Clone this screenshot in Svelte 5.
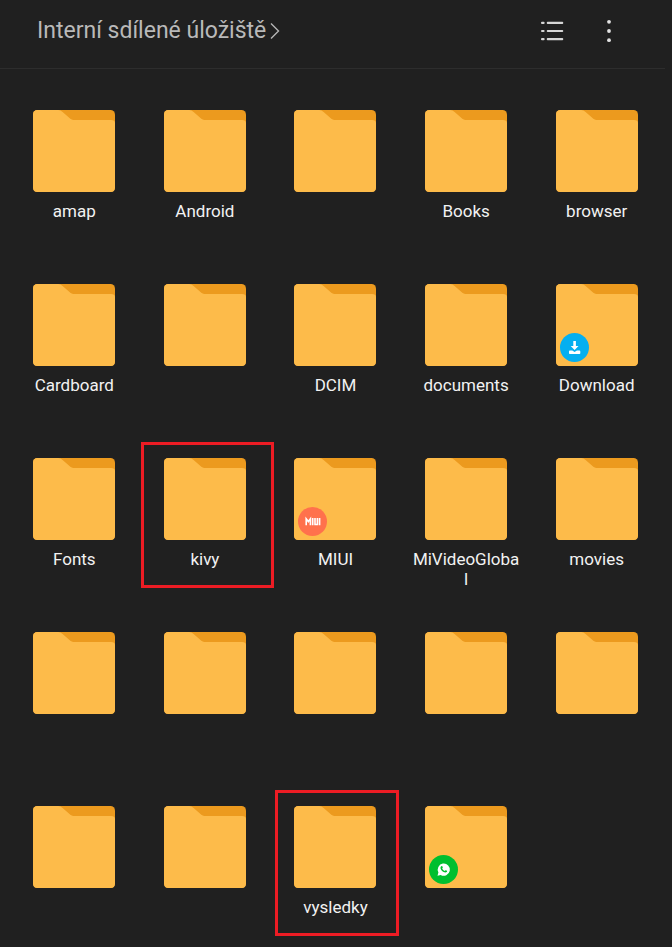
<script>
  const folders = [
    { name: 'amap' },
    { name: 'Android' },
    { name: '' },
    { name: 'Books' },
    { name: 'browser' },
    { name: 'Cardboard' },
    { name: '' },
    { name: 'DCIM' },
    { name: 'documents' },
    { name: 'Download', badge: 'download' },
    { name: 'Fonts' },
    { name: 'kivy', mark: 'wide' },
    { name: 'MIUI', badge: 'miui' },
    { name: 'MiVideoGlobal' },
    { name: 'movies' },
    { name: '' },
    { name: '' },
    { name: '' },
    { name: '' },
    { name: '' },
    { name: '' },
    { name: '' },
    { name: 'vysledky', mark: 'narrow' },
    { name: '', badge: 'whatsapp' }
  ];
</script>

<div class="page">
  <header>
    <button class="path">
      <span>Interní sdílené úložiště</span>
      <svg width="10" height="18" viewBox="0 0 10 18" aria-hidden="true">
        <path d="M1 1.5 8.5 9 1 16.5" fill="none" stroke="#b4b4b4" stroke-width="1.4" />
      </svg>
    </button>
    <div class="actions">
      <button aria-label="Seznam">
        <svg width="24" height="22" viewBox="0 0 24 22" fill="#d6d6d6" aria-hidden="true">
          <rect x="1" y="1.8" width="3.6" height="2.2" rx="1" />
          <rect x="6.8" y="1.8" width="16.4" height="2.2" rx=".8" />
          <rect x="1" y="9.9" width="3.6" height="2.2" rx="1" />
          <rect x="6.8" y="9.9" width="16.4" height="2.2" rx=".8" />
          <rect x="1" y="18" width="3.6" height="2.2" rx="1" />
          <rect x="6.8" y="18" width="16.4" height="2.2" rx=".8" />
        </svg>
      </button>
      <button aria-label="Další možnosti">
        <svg width="24" height="24" viewBox="0 0 24 24" fill="#e2e2e2" aria-hidden="true">
          <circle cx="12" cy="2.8" r="1.9" />
          <circle cx="12" cy="12" r="1.9" />
          <circle cx="12" cy="21.2" r="1.9" />
        </svg>
      </button>
    </div>
  </header>

  <main>
    {#each folders as folder}
      <button class="tile" aria-label={folder.name || 'Složka'}>
        <span class="icon">
          <svg width="82" height="82" viewBox="0 0 82 82" aria-hidden="true">
            <rect width="82" height="82" rx="4.5" fill="#ec9a1e" />
            <path
              d="M4.5 0H25C27 0 28.2 .8 29.6 2L36.5 8C38 9.4 39.5 10 41.5 10H78Q82 10 82 13V77.5Q82 82 77.5 82H4.5Q0 82 0 77.5V4.5Q0 0 4.5 0Z"
              fill="#fdbb4a"
            />
          </svg>
          {#if folder.badge}
            <span class="badge {folder.badge}">
              {#if folder.badge === 'download'}
                <svg width="29" height="29" viewBox="0 0 29 29" fill="#fff" aria-hidden="true">
                  <path d="M13.3 8H15.9V13H18.5L14.6 16.9 10.7 13H13.3Z" />
                  <path d="M9.8 17.6H12.3L14.6 19 16.9 17.6H19.4Q20.3 17.6 20.3 18.5V20.2Q20.3 21 19.4 21H9.8Q9 21 9 20.2V18.5Q9 17.6 9.8 17.6Z" />
                </svg>
              {:else if folder.badge === 'miui'}
                <svg width="29" height="29" viewBox="0 0 29 29" fill="none" stroke="#fff" stroke-width="1.6" aria-hidden="true">
                  <path d="M8.2 18.3V11.8L10.3 14.6 12.4 11.8V18.3M14.7 11V18.3M17 11V17.5H19.4V11M21.6 11V18.3" />
                </svg>
              {:else}
                <svg width="29" height="29" viewBox="0 0 29 29" aria-hidden="true">
                  <path d="M8.5 20.8 9.4 17.5A6.1 6.1 0 1 1 11.7 19.9Z" fill="#fff" />
                  <path
                    d="M12.3 11.3C12.7 10.9 13.2 11 13.4 11.5L13.8 12.5C13.9 12.9 13.3 13.3 13.2 13.6C13.6 14.6 14.6 15.5 15.7 15.9C16 15.8 16.4 15.1 16.8 15.2L18 15.8C18.3 16 18.1 16.7 17.7 17.1C15.5 18.7 11 14.8 11.5 12.5C11.6 12 11.9 11.6 12.3 11.3Z"
                    fill="#00bf2f"
                  />
                </svg>
              {/if}
            </span>
          {/if}
        </span>
        <span class="name">{folder.name}</span>
        {#if folder.mark}
          <span class="mark {folder.mark}"></span>
        {/if}
      </button>
    {/each}
  </main>
</div>

<style>
  :global(body) {
    background: #202020;
  }

  .page {
    min-height: 100vh;
    box-sizing: border-box;
    padding-right: 7px;
    font-family: Roboto, 'Noto Sans', sans-serif;
    color: #f2f2f2;
  }

  button {
    margin: 0;
    padding: 0;
    border: 0;
    background: none;
    color: inherit;
    font: inherit;
    cursor: pointer;
  }

  svg {
    display: block;
  }

  header {
    display: flex;
    align-items: center;
    justify-content: space-between;
    box-sizing: border-box;
    height: 69px;
    padding: 0 44px 7px 37px;
    border-bottom: 1px solid #2d2d2d;
  }

  .path {
    display: flex;
    align-items: center;
    gap: 4px;
    color: #b9b9b9;
    font-size: 23px;
    line-height: 28px;
  }

  .actions {
    display: flex;
    align-items: center;
    gap: 33px;
  }

  main {
    display: grid;
    grid-template-columns: repeat(5, 1fr);
    row-gap: 43px;
    padding: 41px 3px 0 9px;
  }

  .tile {
    position: relative;
    display: flex;
    flex-direction: column;
    align-items: center;
    min-height: 131px;
  }

  .icon {
    position: relative;
  }

  .badge {
    position: absolute;
    left: 4px;
    bottom: 4px;
    border-radius: 50%;
  }

  .download {
    background: #05aff0;
  }

  .miui {
    background: #ff714c;
  }

  .whatsapp {
    background: #00bf2f;
  }

  .name {
    width: 109px;
    margin-top: 9px;
    font-size: 17px;
    line-height: 20px;
    text-align: center;
    overflow-wrap: anywhere;
  }

  .mark {
    position: absolute;
    top: -16px;
    box-sizing: border-box;
    height: 146px;
    border: 3px solid #ed1c24;
  }

  .wide {
    left: 1px;
    width: 133px;
  }

  .narrow {
    left: 5px;
    width: 124px;
  }
</style>
